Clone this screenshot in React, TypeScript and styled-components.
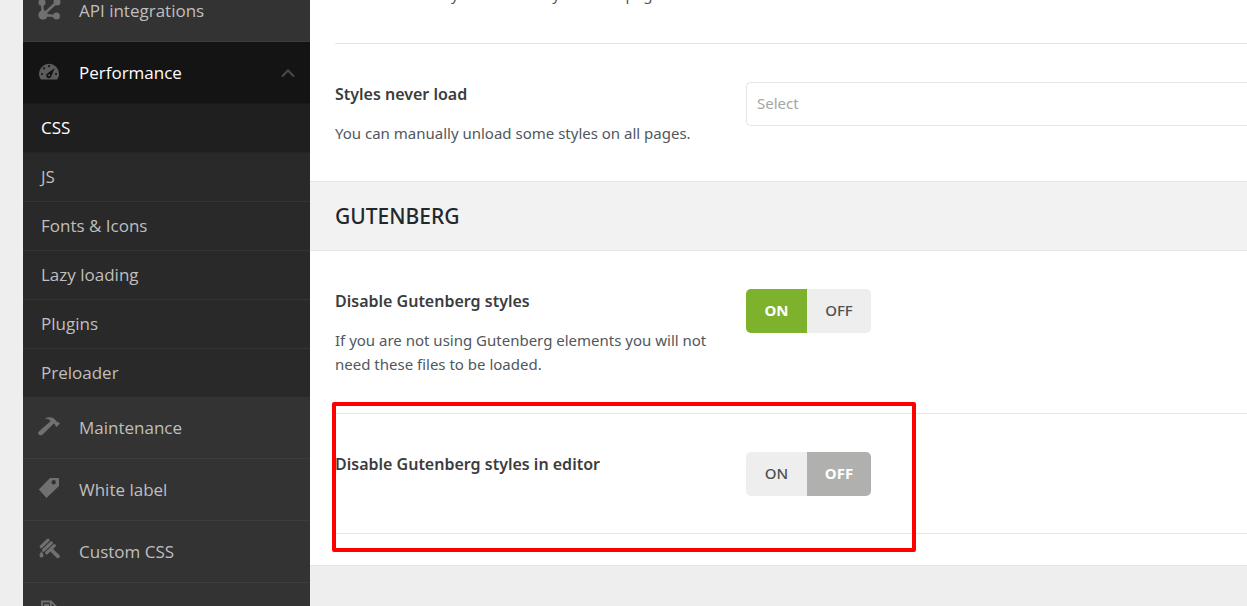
import React, { useId, useState } from "react";
import styled, { createGlobalStyle } from "styled-components";

const GlobalStyle = createGlobalStyle`
  *, *::before, *::after { box-sizing: border-box; }
  body {
    margin: 0;
    background: #eeeeee;
    font-family: "Noto Sans", "Open Sans", sans-serif;
    color: #3c3c3c;
  }
  h2, h3, p, ul { margin: 0; padding: 0; }
  ul { list-style: none; }
`;

const Page = styled.div`
  display: flex;
  height: 100vh;
  padding-left: 23px;
  overflow: hidden;
`;

const Sidebar = styled.nav`
  flex: 0 0 287px;
  background: #333333;
  font-family: "Open Sans", "Noto Sans", sans-serif;
  overflow: hidden;
`;

const Menu = styled.ul`
  margin-top: -20px;
`;

const MenuLink = styled.a<{ $open?: boolean }>`
  display: flex;
  align-items: center;
  height: 62px;
  padding: 0 14px;
  gap: 18px;
  border-bottom: 1px solid ${(p) => (p.$open ? "#1a1a1a" : "#3d3d3d")};
  background: ${(p) => (p.$open ? "#141414" : "#333333")};
  color: ${(p) => (p.$open ? "#ffffff" : "#bfbfbf")};
  font-size: 17px;
  line-height: 24px;
  text-decoration: none;
`;

const MenuLabel = styled.span`
  flex: 1;
`;

const MenuIcon = styled.svg`
  width: 24px;
  height: 24px;
  margin-bottom: 3px;
  color: #707070;
`;

const Chevron = styled.svg`
  width: 16px;
  height: 10px;
`;

const SubMenu = styled.ul`
  & > li:last-child > a {
    height: 48px;
    border-bottom: 0;
  }
`;

const SubLink = styled.a<{ $active?: boolean }>`
  display: flex;
  align-items: center;
  height: 49px;
  padding: 0 18px;
  border-bottom: 1px solid ${(p) => (p.$active ? "#252525" : "#353535")};
  background: ${(p) => (p.$active ? "#1f1f1f" : "#292929")};
  color: ${(p) => (p.$active ? "#ffffff" : "#bfbfbf")};
  font-size: 17px;
  line-height: 24px;
  text-decoration: none;
`;

const Content = styled.main`
  flex: 1;
  min-width: 0;
`;

const Card = styled.div`
  margin-top: -95px;
  padding-bottom: 31px;
  background: #ffffff;
  border-bottom: 1px solid #e5e5e5;
`;

const Row = styled.section`
  position: relative;
  display: grid;
  grid-template-columns: 387px 1fr;
  column-gap: 24px;
  align-items: start;
  margin-left: 25px;
  padding: 38px 0 37px;
  border-bottom: 1px solid #e5e5e5;
`;

const RowTitle = styled.h3`
  font-size: 16px;
  line-height: 24px;
  font-weight: 600;
`;

const RowText = styled.p`
  margin-top: 15px;
  font-size: 15px;
  line-height: 24px;
  color: #50575e;
`;

const SectionTitle = styled.h2`
  margin-top: -2px;
  position: relative;
  padding: 18px 25px;
  border-top: 1px solid #e5e5e5;
  border-bottom: 1px solid #e5e5e5;
  background: #f2f2f2;
  color: #23282d;
  font-size: 21px;
  line-height: 32px;
  font-weight: 500;
  text-transform: uppercase;
`;

const Field = styled.input`
  width: 100%;
  height: 44px;
  padding: 0 10px 2px;
  border: 1px solid #e5e5e5;
  border-right: 0;
  border-radius: 5px 0 0 5px;
  background: #ffffff;
  font-family: inherit;
  font-size: 15px;
  &::placeholder { color: #a5a5a5; opacity: 1; }
`;

const Switch = styled.div`
  display: grid;
  grid-template-columns: 61px 64px;
  width: max-content;
  height: 44px;
  border-radius: 5px;
  overflow: hidden;
`;

const SwitchButton = styled.button<{ $fill?: string }>`
  padding: 0 0 2px;
  border: 0;
  background: ${(p) => p.$fill ?? "#eeeeee"};
  color: ${(p) => (p.$fill ? "#ffffff" : "#50504f")};
  font-family: inherit;
  font-size: 15px;
  font-weight: ${(p) => (p.$fill ? 700 : 500)};
  cursor: pointer;
`;

const Highlight = styled.div`
  position: absolute;
  top: -12px;
  bottom: -19px;
  left: -3px;
  width: 584px;
  border: 4px solid #ff0000;
  border-radius: 2px;
  pointer-events: none;
`;

const icons: Record<string, React.ReactNode> = {
  api: (
    <g fill="currentColor" stroke="currentColor">
      <path d="M6 18 5 6M6 18 20 5M6 18l13.500 1" fill="none" strokeWidth="2.500" />
      <g stroke="none">
        <circle cx="6" cy="18" r="4.700" />
        <circle cx="19.500" cy="19" r="3.500" />
        <circle cx="20" cy="5" r="3.500" />
        <circle cx="5" cy="5.500" r="3.500" />
      </g>
    </g>
  ),
  gauge: (
    <g>
      <path d="M4 20.500C2.700 18.900 2 16.800 2 14.700a10 10 0 0 1 20 0c0 2.100-.7 4.200-2 5.800z" fill="#5c5c5c" />
      <g fill="#141414">
        <circle cx="12" cy="7.200" r="1.100" />
        <circle cx="7" cy="9.300" r="1.100" />
        <circle cx="5" cy="15" r="1.100" />
        <circle cx="19" cy="15" r="1.100" />
        <path d="M17.800 9 14.600 16.500a2.700 2.700 0 1 1-3.700-2.500z" />
      </g>
      <circle cx="12.200" cy="16.300" r="1" fill="#5c5c5c" />
    </g>
  ),
  hammer: (
    <path
      fill="currentColor"
      d="M7.500 4.600C10.500 2.800 14 2.700 16.500 4.200l2.700 2.500c.2 1 .6 1.300 1.500 1.100l2.300 1.700-3.300 3.500-1.800-1.900c.1-1-.3-1.500-1.300-1.300L5.700 20.600c-1.200 1.200-3.600.6-4.500-.9-.4-.8 0-1.500.6-2.100L13.500 7.300C12.500 5.200 10 4.400 7.500 4.600z"
    />
  ),
  tag: (
    <path
      fill="currentColor"
      fillRule="evenodd"
      d="M13 2h8.300l.7.700V10L9.500 22 1.800 13.500zM16.700 4.100a2.200 2.200 0 1 0 0 4.400 2.200 2.200 0 0 0 0-4.400z"
    />
  ),
  brush: (
    <g stroke="currentColor" fill="none" strokeWidth="3.200" strokeLinecap="round">
      <path d="M4.300 8.700 11 2.200" />
      <path d="M6.600 12.200 14.300 4.900" />
      <path d="M9.700 14.900 17.300 7.700" />
      <path d="M14 11.500 21 18.300" strokeWidth="3.800" />
      <path d="M4.500 13.300c1.200 1.800 2 3 2 4.100a2 2 0 0 1-4 0c0-1.100.9-2.300 2-4.100z" fill="currentColor" stroke="none" />
    </g>
  ),
  doc: (
    <g fill="none" stroke="currentColor" strokeWidth="1.800">
      <path d="M5 1.500h9l5.500 5.500V22H5z" />
      <path d="M13.800 1.500v6h6M7 5h5M7 8.500h5" />
    </g>
  ),
};

function Icon({ name }: { name: string }) {
  return (
    <MenuIcon viewBox="0 0 24 24" aria-hidden="true">
      {icons[name]}
    </MenuIcon>
  );
}

function MenuItem({ icon, label }: { icon: string; label: string }) {
  return (
    <li>
      <MenuLink href="#">
        <Icon name={icon} />
        <MenuLabel>{label}</MenuLabel>
      </MenuLink>
    </li>
  );
}

function OnOff({ initial, labelledBy }: { initial: boolean; labelledBy: string }) {
  const [on, setOn] = useState(initial);
  return (
    <Switch role="group" aria-labelledby={labelledBy}>
      <SwitchButton type="button" aria-pressed={on} $fill={on ? "#7eb22d" : undefined} onClick={() => setOn(true)}>
        ON
      </SwitchButton>
      <SwitchButton type="button" aria-pressed={!on} $fill={on ? undefined : "#b0b0ae"} onClick={() => setOn(false)}>
        OFF
      </SwitchButton>
    </Switch>
  );
}

const performancePages = ["CSS", "JS", "Fonts & Icons", "Lazy loading", "Plugins", "Preloader"];

export default function App() {
  const id = useId();
  return (
    <>
      <GlobalStyle />
      <Page>
        <Sidebar aria-label="Theme options">
          <Menu>
            <MenuItem icon="api" label="API integrations" />
            <li>
              <MenuLink href="#" $open aria-expanded="true">
                <Icon name="gauge" />
                <MenuLabel>Performance</MenuLabel>
                <Chevron viewBox="0 0 16 10" aria-hidden="true">
                  <path d="M2 8.500 8 2.500l6 6" fill="none" stroke="#4a4a4a" strokeWidth="2" />
                </Chevron>
              </MenuLink>
              <SubMenu>
                {performancePages.map((page) => (
                  <li key={page}>
                    <SubLink href="#" $active={page === "CSS"} aria-current={page === "CSS" ? "page" : undefined}>
                      {page}
                    </SubLink>
                  </li>
                ))}
              </SubMenu>
            </li>
            <MenuItem icon="hammer" label="Maintenance" />
            <MenuItem icon="tag" label="White label" />
            <MenuItem icon="brush" label="Custom CSS" />
            <MenuItem icon="doc" label="" />
          </Menu>
        </Sidebar>
        <Content>
          <Card>
            <Row>
              <div>
                <RowTitle>&nbsp;</RowTitle>
                <RowText>You can manually load some styles on all pages.</RowText>
              </div>
            </Row>
            <Row>
              <div>
                <RowTitle>
                  <label htmlFor={`${id}-never`}>Styles never load</label>
                </RowTitle>
                <RowText>You can manually unload some styles on all pages.</RowText>
              </div>
              <Field id={`${id}-never`} type="text" placeholder="Select" />
            </Row>
            <SectionTitle>Gutenberg</SectionTitle>
            <Row>
              <div>
                <RowTitle id={`${id}-styles`}>Disable Gutenberg styles</RowTitle>
                <RowText>
                  If you are not using Gutenberg elements you will not need these files to be loaded.
                </RowText>
              </div>
              <OnOff initial labelledBy={`${id}-styles`} />
            </Row>
            <Row>
              <RowTitle id={`${id}-editor`}>Disable Gutenberg styles in editor</RowTitle>
              <OnOff initial={false} labelledBy={`${id}-editor`} />
              <Highlight />
            </Row>
          </Card>
        </Content>
      </Page>
    </>
  );
}
